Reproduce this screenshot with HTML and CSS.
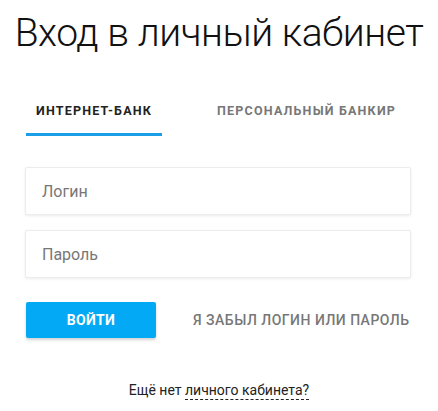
FILE: index.html
```html
<!DOCTYPE html>
<html lang="ru">
<head>
<meta charset="utf-8">
<title>Вход в личный кабинет</title>
<link rel="stylesheet" href="styles.css">
</head>
<body>
<main class="login">
  <h1 class="login__title">Вход в личный кабинет</h1>
  <nav class="tabs">
    <a class="tabs__item tabs__item--active" href="#">Интернет-банк</a>
    <a class="tabs__item" href="#">Персональный банкир</a>
  </nav>
  <form class="form">
    <input class="form__input" type="text" placeholder="Логин">
    <input class="form__input" type="password" placeholder="Пароль">
    <div class="form__actions">
      <button class="btn" type="button">Войти</button>
      <a class="forgot" href="#">Я забыл логин или пароль</a>
    </div>
  </form>
  <p class="signup">Ещё нет <a class="signup__link" href="#">личного кабинета?</a></p>
</main>
</body>
</html>
```
FILE: styles.css
```css
html, body {
  margin: 0;
  padding: 0;
  background: #fff;
}
body {
  font-family: Roboto, "Liberation Sans", Arial, sans-serif;
  color: #222;
}
.login {
  width: 438px;
}
.login__title {
  margin: 10px 0 0;
  font-size: 39px;
  font-weight: 300;
  line-height: 47px;
  letter-spacing: -0.45px;
  text-align: center;
  color: #111;
  white-space: nowrap;
}
.tabs {
  display: flex;
  gap: 45px;
  margin: 47px 0 0 26px;
}
.tabs__item {
  display: block;
  padding: 0 10px 15px;
  font-size: 12.5px;
  line-height: 14px;
  font-weight: 700;
  letter-spacing: 1.2px;
  text-transform: uppercase;
  text-decoration: none;
  color: #777;
  border-bottom: 3px solid transparent;
}
.tabs__item--active {
  color: #222;
  border-bottom-color: #1a9fe6;
}
.form {
  display: flex;
  flex-direction: column;
  gap: 15px;
  margin: 31px 0 0 25px;
}
.form__input {
  box-sizing: border-box;
  width: 386px;
  height: 48px;
  padding: 0 16px;
  border: 1px solid #ececec;
  border-radius: 2px;
  box-shadow: 0 1px 3px rgba(0,0,0,0.08);
  font-family: inherit;
  font-size: 16px;
  color: #333;
  background: #fff;
  outline: none;
}
.form__input::placeholder {
  color: #777;
}
.form__actions {
  display: flex;
  align-items: center;
  margin-top: 9px;
  padding-left: 1px;
}
.btn {
  width: 130px;
  height: 36px;
  border: 0;
  border-radius: 2px;
  background: #03a9f4;
  color: #fff;
  font-family: inherit;
  font-size: 14px;
  font-weight: 700;
  text-transform: uppercase;
  letter-spacing: 0.3px;
  box-shadow: 0 2px 3px rgba(0,0,0,0.18);
  cursor: pointer;
}
.forgot {
  margin-left: 37px;
  font-size: 14px;
  font-weight: 500;
  text-transform: uppercase;
  color: #777;
  text-decoration: none;
  letter-spacing: 0.5px;
  white-space: nowrap;
}
.signup {
  margin: 44px 0 0;
  text-align: center;
  font-size: 14px;
  line-height: 16px;
  color: #222;
}
.signup__link {
  display: inline-block;
  padding-bottom: 1px;
  color: #222;
  text-decoration: none;
  border-bottom: 1px dashed #222;
}
```
